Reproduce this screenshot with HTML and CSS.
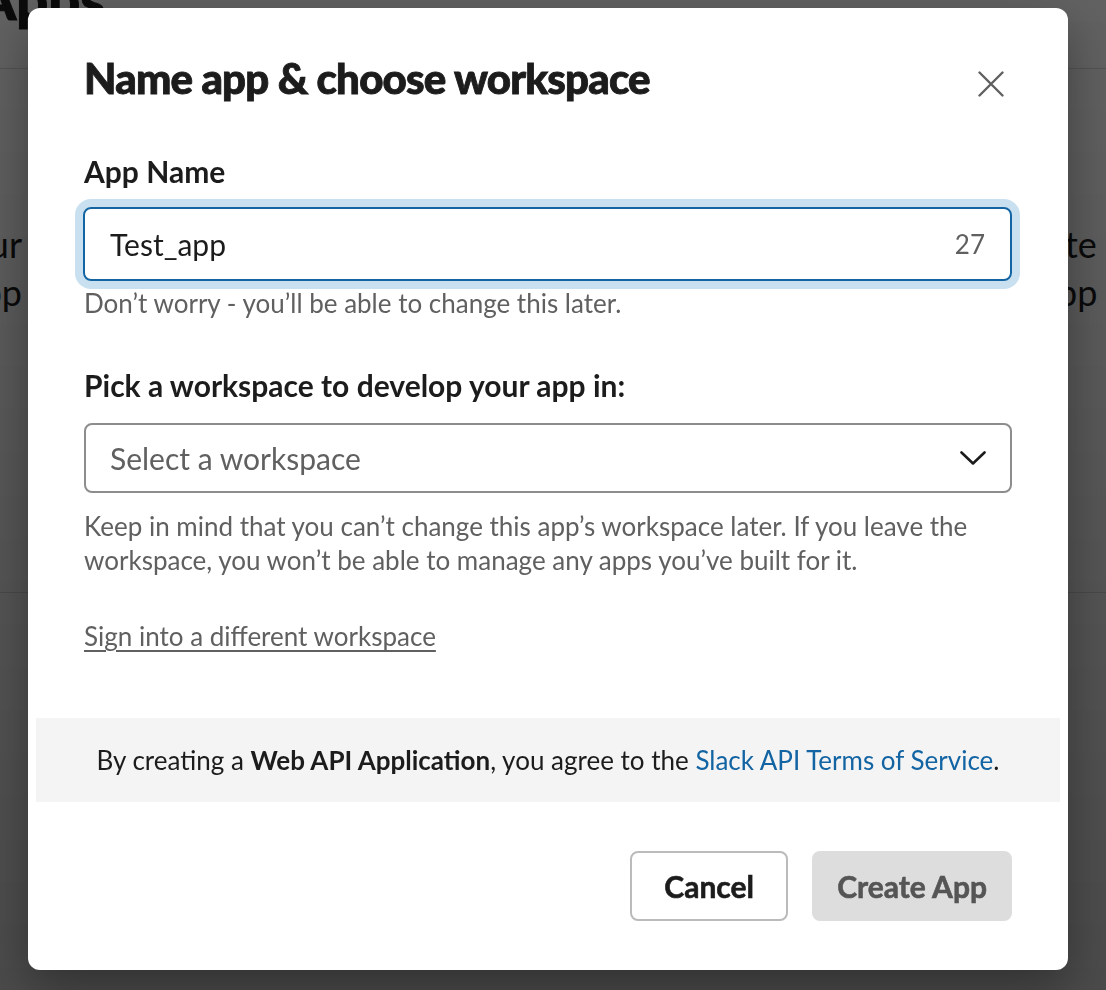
FILE: index.html
```html
<!DOCTYPE html>
<html lang="en">
<head>
<meta charset="utf-8">
<title>Name app &amp; choose workspace</title>
<link rel="stylesheet" href="styles.css">
</head>
<body>
<div class="page">
  <header class="page-head"><h1 class="page-title">Apps</h1></header>
  <section class="page-cols">
    <p class="col-left">Build your<br>own app</p>
    <p class="col-right">Create a<br>an app</p>
  </section>
  <hr class="page-rule">
</div>

<div class="overlay">
  <div class="modal" role="dialog">
    <div class="modal-head">
      <h2 class="modal-title">Name app &amp; choose workspace</h2>
      <button class="close-btn" aria-label="Close">
        <svg width="26" height="26" viewBox="0 0 26 26"><path d="M1.5 1.5 L24.5 24.5 M24.5 1.5 L1.5 24.5" stroke="#616061" stroke-width="2.4" stroke-linecap="round" fill="none"/></svg>
      </button>
    </div>
    <div class="modal-body">
      <label class="field-label">App Name</label>
      <div class="text-input">
        <span class="input-value">Test_app</span>
        <span class="input-count">27</span>
      </div>
      <p class="help">Don’t worry - you’ll be able to change this later.</p>

      <label class="field-label second">Pick a workspace to develop your app in:</label>
      <div class="select-input">
        <span class="select-placeholder">Select a workspace</span>
        <svg width="26" height="15" viewBox="0 0 26 15"><path d="M1.5 1.5 L13 12.5 L24.5 1.5" stroke="#1d1c1d" stroke-width="2.6" stroke-linecap="round" stroke-linejoin="round" fill="none"/></svg>
      </div>
      <p class="note">Keep in mind that you can’t change this app’s workspace later. If you leave the workspace, you won’t be able to manage any apps you’ve built for it.</p>
      <a class="switch-link" href="#">Sign into a different workspace</a>
    </div>
    <div class="terms">
      <p>By creating a <b>Web API Application</b>, you agree to the <a href="#">Slack API Terms of Service</a>.</p>
    </div>
    <div class="modal-foot">
      <button class="btn btn-cancel">Cancel</button>
      <button class="btn btn-create" disabled>Create App</button>
    </div>
  </div>
</div>
</body>
</html>
```

FILE: styles.css
```css
* { box-sizing: border-box; }

html, body {
  margin: 0;
  padding: 0;
  height: 100%;
  overflow: hidden;
  background: #ffffff;
  font-family: Lato, "Noto Sans", "Liberation Sans", sans-serif;
  color: #1d1c1d;
}

/* ---------- page behind the modal ---------- */
.page-head {
  display: flow-root;
  height: 69px;
  border-bottom: 1px solid #dddddd;
}
.page-title {
  margin: -29px 0 0 -23px;
  font-size: 56px;
  line-height: 56px;
  font-weight: 900;
  -webkit-text-stroke: 1px #1d1c1d;
  color: #1d1c1d;
}
.page-cols {
  display: flex;
  margin-left: -278px;
  padding-top: 151px;
}
.page-cols p {
  flex-shrink: 0;
  margin: 0;
  font-size: 36px;
  line-height: 48px;
  color: #1d1c1d;
}
.page-cols .col-left {
  width: 300px;
  text-align: right;
}
.page-cols .col-right {
  margin-left: 970px;
  white-space: nowrap;
}
.page-rule {
  margin: 276px 0 0;
  border: 0;
  border-top: 1px solid #dddddd;
}

/* ---------- overlay + modal ---------- */
.overlay {
  position: fixed;
  inset: 0;
  background: linear-gradient(to bottom, rgba(0,0,0,0.62), rgba(0,0,0,0.71));
  padding: 8px 0 0 28px;
}
.modal {
  width: 1040px;
  background: #ffffff;
  border-radius: 12px;
  box-shadow: 0 18px 48px rgba(0,0,0,0.35);
  display: flex;
  flex-direction: column;
}

.modal-head {
  display: flex;
  justify-content: space-between;
  align-items: flex-start;
  padding: 40px 56px 0;
}
.modal-title {
  margin: 0;
  font-size: 42px;
  line-height: 60px;
  font-weight: 900;
  letter-spacing: -0.8px;
  -webkit-text-stroke: 0.9px #1d1c1d;
  color: #1d1c1d;
}
.close-btn {
  width: 72px;
  height: 72px;
  margin-right: -15px;
  border: 0;
  padding: 0;
  background: transparent;
  display: flex;
  align-items: center;
  justify-content: center;
}

.modal-body {
  display: flex;
  flex-direction: column;
  padding: 29px 56px 65px;
}
.field-label {
  font-size: 30px;
  line-height: 44px;
  font-weight: 700;
  margin-bottom: 14px;
}
.field-label.second {
  margin-top: 42px;
  margin-bottom: 16px;
}

.text-input {
  height: 74px;
  border: 2px solid #1264a3;
  border-radius: 8px;
  box-shadow: 0 0 0 8px #c8e0f0;
  display: flex;
  align-items: center;
  justify-content: space-between;
  padding: 0 25px 0 25px;
  margin-left: -1px;
}
.input-value {
  font-size: 30px;
  color: #1d1c1d;
}
.input-count {
  font-size: 26px;
  color: #616061;
}

.help {
  margin: 4px 0 0;
  font-size: 26px;
  line-height: 36px;
  color: #616061;
}

.select-input {
  height: 70px;
  border: 2px solid #8d8d8d;
  border-radius: 8px;
  display: flex;
  align-items: center;
  justify-content: space-between;
  padding: 0 24px 0 24px;
}
.select-placeholder {
  font-size: 30px;
  color: #616061;
}

.note {
  margin: 16px 0 0;
  font-size: 26px;
  line-height: 34px;
  color: #616061;
}
.switch-link {
  align-self: flex-start;
  margin-top: 42px;
  font-size: 26px;
  line-height: 34px;
  color: #616061;
  text-decoration: underline;
  text-underline-offset: 4px;
}

.terms {
  margin: 0 8px;
  height: 84px;
  background: #f4f4f4;
  display: flex;
  align-items: center;
  justify-content: center;
}
.terms p {
  margin: 0;
  font-size: 26px;
  line-height: 36px;
  color: #1d1c1d;
}
.terms b { font-weight: 700; }
.terms a {
  color: #1264a3;
  text-decoration: none;
}

.modal-foot {
  display: flex;
  justify-content: flex-end;
  gap: 24px;
  padding: 49px 56px 49px;
}
.btn {
  height: 70px;
  min-width: 158px;
  padding: 0 23px;
  border-radius: 8px;
  font-family: Lato, "Noto Sans", "Liberation Sans", sans-serif;
  font-size: 30px;
  font-weight: 700;
}
.btn-cancel {
  background: #ffffff;
  border: 2px solid #bbbbbb;
  color: #1d1c1d;
  -webkit-text-stroke: 0.6px #1d1c1d;
}
.btn-create {
  background: #dddddd;
  border: 2px solid #dddddd;
  color: #565556;
  -webkit-text-stroke: 0.6px #565556;
}
```
